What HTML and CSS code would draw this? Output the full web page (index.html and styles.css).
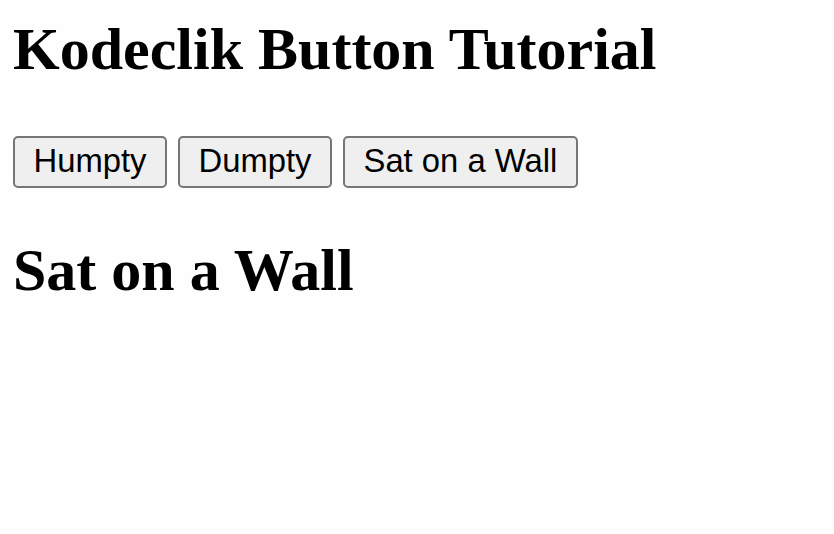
FILE: index.html
```html
<!DOCTYPE html>
<html>
<head>
<meta charset="utf-8">
<title>Kodeclik Button Tutorial</title>
<link rel="stylesheet" href="styles.css">
</head>
<body>
<h1 class="title">Kodeclik Button Tutorial</h1>
<div class="buttons">
  <button class="btn">Humpty</button>
  <button class="btn">Dumpty</button>
  <button class="btn">Sat on a Wall</button>
</div>
<h1 class="result">Sat on a Wall</h1>
</body>
</html>
```
FILE: styles.css
```css
html, body {
  margin: 0;
  padding: 0;
  background: #fefefe;
}
body {
  padding: 0 13px;
  font-family: "Liberation Serif", "Times New Roman", serif;
  color: #000;
}
.title {
  margin: 15px 0 0;
  font-size: 60px;
  line-height: 69px;
  font-weight: bold;
}
.buttons {
  display: flex;
  gap: 11px;
  margin-top: 52px;
}
.btn {
  font-family: "Liberation Sans", Arial, sans-serif;
  font-size: 32.8px;
  line-height: 38px;
  padding: 4px 18.5px 6px;
  border: 2px solid #767676;
  border-radius: 5px;
  background: #efefef;
  color: #000;
  margin: 0;
}
.result {
  margin: 48px 0 0;
  font-size: 60px;
  line-height: 69px;
  font-weight: bold;
}
```
